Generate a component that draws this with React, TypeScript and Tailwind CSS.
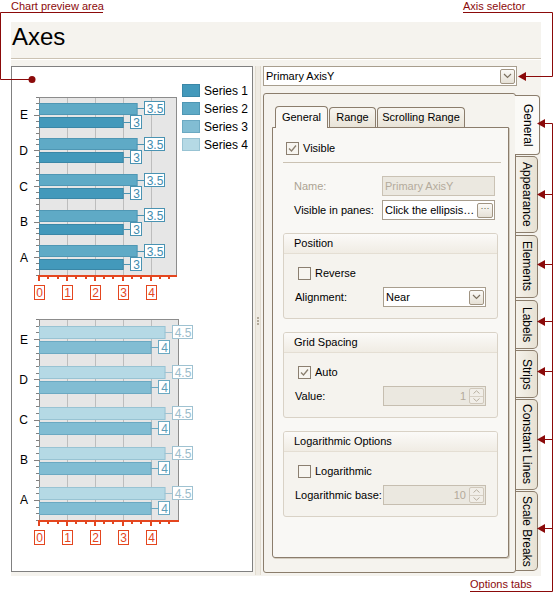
import React from 'react';

const TICK = 27.9;
const X0 = 39;
const RED = '#e4461f';

type BarSpec = {
  value: number;
  label: string;
  y: number;
  h: number;
  w: number;
  fill: string;
  stroke: string;
  text: string;
  box: string;
};

type ChartProps = { top: number; bottom: number; right: number; upper: BarSpec; lower: BarSpec };

function BarChart({ top, bottom, right, upper, lower }: ChartProps) {
  const step = (bottom - top) / 5;
  const cats = ['E', 'D', 'C', 'B', 'A'];
  const majors = [0, 1, 2, 3, 4].map((k) => X0 + k * TICK);
  const minors: number[] = [];
  for (let k = 0; k < 5; k++) {
    minors.push(X0 + (k + 1 / 3) * TICK, X0 + (k + 2 / 3) * TICK);
  }
  const yTicks = Array.from({ length: 31 }, (_, j) => ({ y: top + (j * step) / 6, major: j % 6 === 3 }));

  const bar = (c: number, s: BarSpec, key: string) => {
    const end = X0 + s.value * TICK;
    const mid = c + s.y + s.h / 2;
    const bx = Math.round(end) + 7;
    return (
      <g key={key}>
        <rect x={X0 + 0.5} y={Math.round(c + s.y) + 0.5} width={s.value * TICK} height={s.h} fill={s.fill} stroke={s.stroke} />
        <line x1={end} y1={Math.round(mid) + 0.5} x2={bx} y2={Math.round(mid) + 0.5} stroke={s.box} />
        <rect x={bx + 0.5} y={Math.round(mid) - 6.5} width={s.w} height={13} fill="#fff" stroke={s.box} />
        <text x={bx + 1 + s.w / 2} y={Math.round(mid) + 4.5} textAnchor="middle" fontSize="12" fill={s.text}>
          {s.label}
        </text>
      </g>
    );
  };

  return (
    <g fontFamily="'Liberation Sans', Arial, sans-serif">
      <rect x={X0 + 0.5} y={top + 0.5} width={right - X0} height={bottom - top} fill="#e6e6e6" stroke="#8c8c8c" />
      {majors.slice(1).map((x) => (
        <line key={x} x1={Math.round(x) + 0.5} y1={top + 1} x2={Math.round(x) + 0.5} y2={bottom} stroke="#bdbdbd" />
      ))}
      {yTicks.map((t, i) => (
        <line
          key={i}
          x1={t.major ? 34 : 36}
          y1={Math.round(t.y) + 0.5}
          x2={39}
          y2={Math.round(t.y) + 0.5}
          stroke="#808080"
        />
      ))}
      {cats.map((c, i) => {
        const cy = top + step * (i + 0.5);
        return (
          <g key={c}>
            <text x={28} y={cy + 4.5} textAnchor="end" fontSize="12" fill="#000">
              {c}
            </text>
            {bar(cy, upper, 'u' + c)}
            {bar(cy, lower, 'l' + c)}
          </g>
        );
      })}
      <rect x={38} y={bottom} width={right - 37} height={2} fill={RED} />
      {majors.map((x) => (
        <rect key={'M' + x} x={Math.round(x) - 1} y={bottom + 2} width={2} height={4} fill={RED} />
      ))}
      {minors.map((x) => (
        <rect key={'m' + x} x={Math.round(x) - 1} y={bottom + 2} width={2} height={2} fill={RED} />
      ))}
      {majors.map((x, k) => (
        <g key={'L' + k}>
          <rect x={Math.round(x) - 5 + 0.5} y={bottom + 10.5} width={10} height={14} fill="#fff" stroke={RED} />
          <text x={Math.round(x) + 0.5} y={bottom + 22} textAnchor="middle" fontSize="12" fill={RED}>
            {k}
          </text>
        </g>
      ))}
    </g>
  );
}

const legend = [
  { name: 'Series 1', fill: '#4399bb', stroke: '#3a87a7' },
  { name: 'Series 2', fill: '#5faac6', stroke: '#4f97b4' },
  { name: 'Series 3', fill: '#82bdd3', stroke: '#6ba9c2' },
  { name: 'Series 4', fill: '#b5d9e5', stroke: '#98c3d3' },
];

function ChartPreview() {
  return (
    <svg width="240" height="504" className="block">
      <g transform="translate(-12 -67)">
        <BarChart
          top={97}
          bottom={275}
          right={176}
          upper={{ value: 3.5, label: '3.5', y: -12, h: 11, w: 20, fill: '#5faac6', stroke: '#4f97b4', text: '#3f8caf', box: '#4a93b2' }}
          lower={{ value: 3, label: '3', y: 2, h: 10, w: 11, fill: '#4399bb', stroke: '#3a87a7', text: '#3f8caf', box: '#4a93b2' }}
        />
        <BarChart
          top={319}
          bottom={520}
          right={178}
          upper={{ value: 4.5, label: '4.5', y: -13, h: 12, w: 20, fill: '#b5d9e5', stroke: '#98c3d3', text: '#9bbccb', box: '#9fc2d1' }}
          lower={{ value: 4, label: '4', y: 2, h: 12, w: 11, fill: '#82bdd3', stroke: '#6ba9c2', text: '#5f9db8', box: '#6ba9c2' }}
        />
        {legend.map((l, i) => (
          <g key={l.name}>
            <rect x={182.5} y={84.5 + i * 18} width={17} height={12} fill={l.fill} stroke={l.stroke} />
            <text x={204} y={95 + i * 18} fontSize="12" fill="#000" fontFamily="'Liberation Sans', Arial, sans-serif">
              {l.name}
            </text>
          </g>
        ))}
      </g>
    </svg>
  );
}

const Check = () => (
  <svg width="9" height="9" viewBox="0 0 9 9">
    <path d="M1 4.5 L3.5 7 L8 1.5" fill="none" stroke="#8a7f6f" strokeWidth="1.3" />
  </svg>
);

function CheckBox({ checked, label }: { checked?: boolean; label: string }) {
  return (
    <div className="flex items-center h-[13px]">
      <div className="w-[13px] h-[13px] border border-[#8b7f70] bg-[#f7f5f0] flex items-center justify-center">
        {checked && <Check />}
      </div>
      <span className="ml-[4px] text-[11px] leading-none">{label}</span>
    </div>
  );
}

const ChevronDown = () => (
  <svg width="9" height="6" viewBox="0 0 9 6">
    <path d="M1 1 L4.5 4.5 L8 1" fill="none" stroke="#7b705f" strokeWidth="1.2" />
  </svg>
);

function DropButton() {
  return (
    <div className="w-[15px] h-[15px] rounded-[2px] border border-[#a09482] bg-linear-to-b from-[#fbfaf7] to-[#e6e1d6] flex items-center justify-center">
      <ChevronDown />
    </div>
  );
}

function Combo({ value, className }: { value: string; className: string }) {
  return (
    <div className={`h-[20px] border border-[#a89e8e] bg-white flex items-center pl-[2px] pr-[1px] ${className}`}>
      <span className="flex-1 text-[11px] leading-none">{value}</span>
      <DropButton />
    </div>
  );
}

function Spin({ value }: { value: string }) {
  return (
    <div className="h-[20px] w-[103px] border border-[#c6beb0] bg-[#ebe8e0] flex items-center pr-[1px]">
      <span className="flex-1 text-right pr-[3px] text-[11px] leading-none text-[#b3aa9b]">{value}</span>
      <div className="w-[15px] h-[16px] flex flex-col border border-[#d0c8bb] rounded-[2px] bg-[#f1eee8]">
        <div className="flex-1 flex items-center justify-center border-b border-[#d6cfc3]">
          <svg width="7" height="4" viewBox="0 0 7 4">
            <path d="M0.5 3.5 L3.5 0.8 L6.5 3.5" fill="none" stroke="#b7ae9f" />
          </svg>
        </div>
        <div className="flex-1 flex items-center justify-center">
          <svg width="7" height="4" viewBox="0 0 7 4">
            <path d="M0.5 0.5 L3.5 3.2 L6.5 0.5" fill="none" stroke="#b7ae9f" />
          </svg>
        </div>
      </div>
    </div>
  );
}

function Group({ title, children }: { title: string; children: React.ReactNode }) {
  return (
    <div className="w-[215px] h-[86px] border border-[#d9d2c6] rounded-[3px] bg-[#f5f3ee] flex flex-col overflow-hidden">
      <div className="h-[20px] shrink-0 flex items-center pl-[10px] text-[11px] border-b border-[#e4ded3] bg-linear-to-b from-[#fbfaf8] to-[#f0ece4]">
        {title}
      </div>
      <div className="flex-1 pl-[11px] pt-[13px]">{children}</div>
    </div>
  );
}

function Row({ label, children, disabled }: { label: string; children: React.ReactNode; disabled?: boolean }) {
  return (
    <div className="flex items-center h-[20px]">
      <span className={`w-[88px] text-[11px] leading-none ${disabled ? 'text-[#aca393]' : ''}`}>{label}</span>
      {children}
    </div>
  );
}

const vtabs = [
  { name: 'General', cls: 'mt-[0px] h-[60px]', active: true },
  { name: 'Appearance', cls: 'mt-[1px] h-[77px]' },
  { name: 'Elements', cls: 'mt-[2px] h-[63px]' },
  { name: 'Labels', cls: 'mt-[2px] h-[49px]' },
  { name: 'Strips', cls: 'mt-[1px] h-[48px]' },
  { name: 'Constant Lines', cls: 'mt-[1px] h-[91px]' },
  { name: 'Scale Breaks', cls: 'mt-[1px] h-[80px]' },
];

const arrowYs = [123.5, 194.5, 264.5, 321.5, 371.5, 439.5, 528.5];

function Annotations() {
  const c = '#8b0a0a';
  return (
    <>
      <svg width="554" height="592" className="absolute left-0 top-0 pointer-events-none">
        <path d="M103 12.5 H0.5 V79.5 H30" fill="none" stroke={c} />
        <circle cx="32" cy="79.5" r="3.5" fill={c} />
        <path d="M463 12.5 H552.5 V76.5 H525" fill="none" stroke={c} />
        <polygon points="518,76.5 526,72 526,81" fill={c} />
        <path d="M470 591.5 H552.5 V123.5" fill="none" stroke={c} />
        {arrowYs.map((y) => (
          <g key={y}>
            <line x1={544} y1={y} x2={552.5} y2={y} stroke={c} />
            <polygon points={`537,${y} 545,${y - 4.5} 545,${y + 4.5}`} fill={c} />
          </g>
        ))}
      </svg>
      <span className="absolute left-[11px] top-[0px] text-[11px] leading-[12px] text-[#8b0a0a] whitespace-nowrap">Chart preview area</span>
      <span className="absolute left-[463px] top-[0px] text-[11px] leading-[12px] text-[#8b0a0a] whitespace-nowrap">Axis selector</span>
      <span className="absolute left-[470px] top-[578px] text-[11px] leading-[12px] text-[#8b0a0a] whitespace-nowrap">Options tabs</span>
    </>
  );
}

export default function App() {
  return (
    <div className="relative w-[554px] h-[592px] bg-white overflow-hidden pt-[22px] pl-[11px] font-['Liberation_Sans',Arial,sans-serif] text-black">
      <div className="w-[530px] h-[554px] bg-[#f5f3ee] flex flex-col">
        {/* Title */}
        <div className="h-[36px] pl-[1px] text-[24px] leading-[29px]">Axes</div>
        <div className="h-px bg-[#cbc2b3]" />
        <div className="h-px bg-white" />

        <div className="mt-[6px] flex">
          {/* Chart preview */}
          <div className="w-[242px] h-[506px] border border-[#808080] bg-white">
            <ChartPreview />
          </div>

          {/* Splitter */}
          <div className="ml-[2px] w-[6px] h-[509px] border-x border-[#e2dcd0] bg-[#efebe3] flex flex-col items-center justify-center gap-[1px]">
            <div className="w-[2px] h-[2px] bg-[#b3aa9b]" />
            <div className="w-[2px] h-[2px] bg-[#b3aa9b]" />
            <div className="w-[2px] h-[2px] bg-[#b3aa9b]" />
          </div>

          {/* Right panel */}
          <div className="ml-[2px] w-[278px] flex flex-col">
            <Combo value="Primary AxisY" className="w-[254px]" />

            <div className="mt-[7px] flex">
              <div className="w-[253px] h-[480px] border border-[#8b7d6c] rounded-[3px] bg-[#f5f3ee] pl-[8px] pt-[12px]">
                {/* Inner tabs */}
                <div className="flex items-end h-[21px] pl-[3px] gap-[1px] text-[11px]">
                  <div className="relative z-10 w-[53px] h-[22px] -mb-px border border-b-0 border-[#8b7d6c] rounded-t-[4px] bg-[#f9f8f5] flex items-center justify-center leading-none">
                    General
                  </div>
                  <div className="w-[47px] h-[20px] border border-b-0 border-[#8b7d6c] rounded-t-[4px] bg-linear-to-b from-[#f8f6f1] to-[#e9e4d8] flex items-center justify-center leading-none">
                    Range
                  </div>
                  <div className="w-[88px] h-[20px] border border-b-0 border-[#8b7d6c] rounded-t-[4px] bg-linear-to-b from-[#f8f6f1] to-[#e9e4d8] flex items-center justify-center leading-none">
                    Scrolling Range
                  </div>
                </div>
                <div className="w-[237px] h-[431px] border border-[#8b7d6c] rounded-b-[3px] bg-[#f9f8f5] shadow-[1px_1px_0_#d4cdc0] px-[10px] flex flex-col">
                  <div className="mt-[14px] ml-[3px]">
                    <CheckBox checked label="Visible" />
                  </div>
                  <div className="mt-[7px] w-[218px] h-px bg-[#cbc2b3]" />
                  <div className="mt-[13px] pl-[11px] flex flex-col gap-[4px]">
                    <Row label="Name:" disabled>
                      <div className="w-[113px] h-[20px] border border-[#cac2b4] bg-[#ebe8e0] flex items-center pl-[2px] text-[11px] leading-none text-[#b4ab9c]">
                        Primary AxisY
                      </div>
                    </Row>
                    <Row label="Visible in panes:">
                      <div className="w-[113px] h-[20px] border border-[#a89e8e] bg-white flex items-center pl-[2px] pr-[1px]">
                        <span className="flex-1 text-[11px] leading-none whitespace-nowrap overflow-hidden">Click the ellipsis…</span>
                        <div className="w-[16px] h-[15px] rounded-[2px] border border-[#a09482] bg-linear-to-b from-[#fbfaf7] to-[#e6e1d6] flex items-center justify-center text-[9px] leading-none text-[#5e5548] pb-[3px]">
                          ···
                        </div>
                      </div>
                    </Row>
                  </div>

                  <div className="mt-[13px] flex flex-col gap-[13px]">
                    <Group title="Position">
                      <div className="ml-[3px]">
                        <CheckBox label="Reverse" />
                      </div>
                      <div className="mt-[7px]">
                        <Row label="Alignment:">
                          <Combo value="Near" className="w-[103px]" />
                        </Row>
                      </div>
                    </Group>
                    <Group title="Grid Spacing">
                      <div className="ml-[3px]">
                        <CheckBox checked label="Auto" />
                      </div>
                      <div className="mt-[7px]">
                        <Row label="Value:">
                          <Spin value="1" />
                        </Row>
                      </div>
                    </Group>
                    <Group title="Logarithmic Options">
                      <div className="ml-[3px]">
                        <CheckBox label="Logarithmic" />
                      </div>
                      <div className="mt-[7px]">
                        <Row label="Logarithmic base:">
                          <Spin value="10" />
                        </Row>
                      </div>
                    </Group>
                  </div>
                </div>
              </div>

              {/* Vertical option tabs */}
              <div className="flex flex-col pt-[2px]">
                {vtabs.map((t) =>
                  t.active ? (
                    <div
                      key={t.name}
                      className={`relative -ml-px w-[25px] border-y border-r border-[#8b7d6c] rounded-r-[4px] bg-[#fbfaf7] flex items-center justify-center ${t.cls}`}
                    >
                      <span className="[writing-mode:vertical-rl] text-[12px] leading-none pl-[1px]">{t.name}</span>
                    </div>
                  ) : (
                    <div
                      key={t.name}
                      className={`w-[22px] border-y border-r border-[#8b7d6c] rounded-r-[5px] bg-linear-to-r from-[#f5f2eb] to-[#e7e1d3] flex items-center justify-center ${t.cls}`}
                    >
                      <span className="[writing-mode:vertical-rl] text-[12px] leading-none">{t.name}</span>
                    </div>
                  )
                )}
              </div>
            </div>
          </div>
        </div>
      </div>
      <Annotations />
    </div>
  );
}
